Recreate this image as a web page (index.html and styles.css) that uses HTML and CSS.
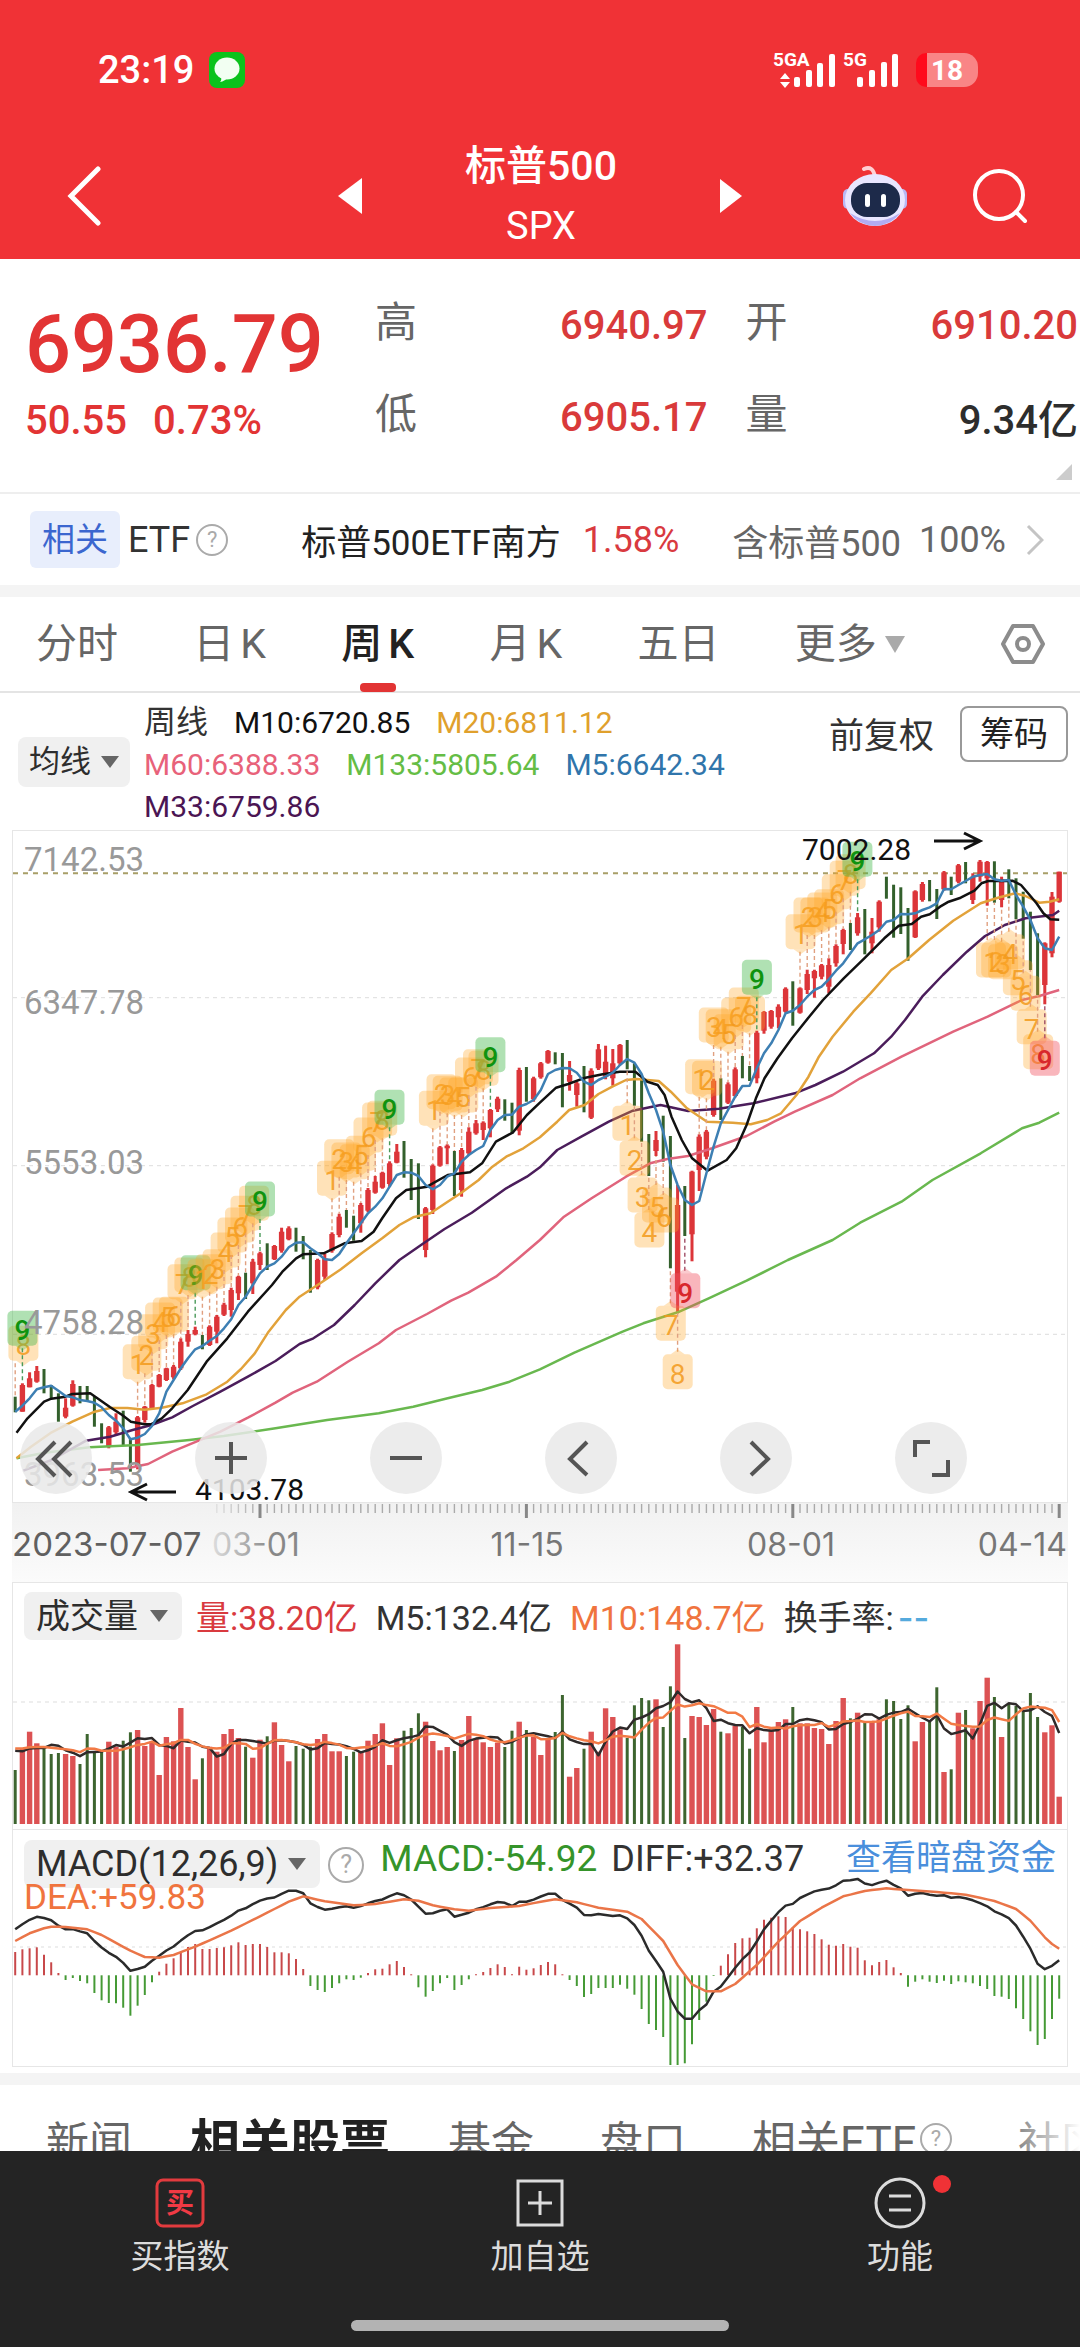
FILE: index.html
```html
<!DOCTYPE html>
<html lang="zh-CN">
<head>
<meta charset="utf-8">
<meta name="viewport" content="width=device-width, initial-scale=1">
<title>标普500 SPX</title>
<link rel="stylesheet" href="styles.css">
</head>
<body>
<header class="top">
  <div class="status">
    <div class="status-side">
      <span class="clock">23:19</span>
      <svg class="msg" viewBox="0 0 36 36" aria-hidden="true"><rect width="36" height="36" rx="8" fill="#0bc21c"/><ellipse cx="18" cy="16.500" rx="12.500" ry="11" fill="#f2fff2"/><path d="M12 24q1 4-1 6 5-1 7-4z" fill="#f2fff2"/></svg>
    </div>
    <div class="status-side">
      <svg class="signals" viewBox="0 0 128 40" aria-label="5GA 5G">
        <g fill="#fff">
          <text x="0" y="16" class="net">5GA</text><text x="70" y="16" class="net">5G</text>
          <path d="M12 23l5 6H7zM12 38l5-6H7z"/>
          <rect x="21" y="27" width="6" height="10" rx="2"/><rect x="33" y="20" width="6" height="17" rx="2"/><rect x="44" y="13" width="6" height="24" rx="2"/><rect x="56" y="4" width="6" height="33" rx="2"/>
          <rect x="84" y="27" width="6" height="10" rx="2"/><rect x="96" y="20" width="6" height="17" rx="2"/><rect x="108" y="12" width="6" height="25" rx="2"/><rect x="119" y="4" width="6" height="33" rx="2"/>
        </g>
      </svg>
      <span class="battery">18</span>
    </div>
  </div>
  <nav class="bar">
    <button class="icon-btn" aria-label="返回"><svg width="36" height="60" viewBox="0 0 36 60"><path d="M32 3 5 30l27 27" fill="none" stroke="#fff" stroke-width="5" stroke-linecap="round"/></svg></button>
    <div class="switcher">
      <button class="icon-btn" aria-label="上一个"><svg width="24" height="36" viewBox="0 0 24 36"><path d="M24 0v36L0 18z" fill="#fff"/></svg></button>
      <h1 class="title">标普500<small>SPX</small></h1>
      <button class="icon-btn" aria-label="下一个"><svg width="22" height="34" viewBox="0 0 22 34"><path d="M0 0v34l22-17z" fill="#fff"/></svg></button>
    </div>
    <div class="bar-actions">
      <button class="icon-btn" aria-label="智能助手"><svg width="66" height="62" viewBox="0 0 66 62"><path d="M22 4q9-4 11 8" fill="none" stroke="#ffd0d4" stroke-width="4" stroke-linecap="round"/><rect x="1" y="24" width="10" height="20" rx="5" fill="#b9b8f5"/><rect x="55" y="24" width="10" height="20" rx="5" fill="#b9b8f5"/><ellipse cx="33" cy="35" rx="30" ry="26" fill="#e9e6ff"/><path d="M8 48q25 16 50 0-8 12-25 13Q16 60 8 48z" fill="#b2acf2"/><rect x="9" y="18" width="49" height="34" rx="16" fill="#1d2a4a"/><rect x="23" y="29" width="5" height="13" rx="2.500" fill="#fff"/><rect x="39" y="29" width="5" height="13" rx="2.500" fill="#fff"/></svg></button>
      <button class="icon-btn" aria-label="搜索"><svg width="56" height="56" viewBox="0 0 56 56"><circle cx="27" cy="27" r="24" fill="none" stroke="#fff" stroke-width="4"/><path d="m44 44 9 9" stroke="#fff" stroke-width="4" stroke-linecap="round"/></svg></button>
    </div>
  </nav>
</header>

<main>
  <section class="quote">
    <div class="now"><strong>6936.79</strong><p><span>50.55</span><span>0.73%</span></p></div>
    <dl class="facts">
      <div><dt>高</dt><dd>6940.97</dd></div>
      <div><dt>开</dt><dd>6910.20</dd></div>
      <div><dt>低</dt><dd>6905.17</dd></div>
      <div><dt>量</dt><dd class="plain">9.34亿</dd></div>
    </dl>
    <svg class="corner" width="16" height="16" viewBox="0 0 16 16" aria-hidden="true"><path d="M16 0v16H0z" fill="#ccc"/></svg>
  </section>

  <a class="etf" href="#etf">
    <span class="tag">相关</span><span class="etf-word">ETF</span><span class="help">?</span>
    <span class="etf-name">标普500ETF南方</span><span class="up">1.58%</span>
    <span class="etf-hold">含标普500</span><span class="etf-pct">100%</span>
    <svg width="18" height="32" viewBox="0 0 18 32" aria-hidden="true"><path d="m2 2 14 14L2 30" fill="none" stroke="#c4c4c4" stroke-width="3"/></svg>
  </a>

  <nav class="periods">
    <button>分时</button><button>日<span>K</span></button><button class="on">周<span>K</span></button><button>月<span>K</span></button><button>五日</button>
    <button class="more">更多<i class="caret light"></i></button>
    <button class="gear" aria-label="设置"><svg width="46" height="42" viewBox="0 0 46 42"><path d="M13 3h20l10 18-10 18H13L3 21z" fill="none" stroke="#8c8c8c" stroke-width="4" stroke-linejoin="round"/><circle cx="23" cy="21" r="6" fill="none" stroke="#8c8c8c" stroke-width="4"/></svg></button>
  </nav>

  <section class="averages">
    <button class="pick">均线<i class="caret"></i></button>
    <p class="legend"><span class="name">周线</span><span class="m10">M10:6720.85</span><span class="m20">M20:6811.12</span><br><span class="m60">M60:6388.33</span><span class="m133">M133:5805.64</span><span class="m5">M5:6642.34</span><br><span class="m33">M33:6759.86</span></p>
    <button class="adjust">前复权</button>
    <button class="chips">筹码</button>
  </section>

  <section class="charts">
    <div class="panel price">
      <svg id="price" viewBox="0 0 1054 671" role="img" aria-label="周K线图"></svg>
      <div class="tools">
        <button aria-label="最早"><svg viewBox="0 0 72 72"><path d="M51 20 34 37l17 17M35 20 18 37l17 17"/></svg></button>
        <button aria-label="放大"><svg viewBox="0 0 72 72"><path d="M36 20v32M20 36h32"/></svg></button>
        <button aria-label="缩小"><svg viewBox="0 0 72 72"><path d="M20 36h32"/></svg></button>
        <button aria-label="向左"><svg viewBox="0 0 72 72"><path d="M42 20 25 37l17 16"/></svg></button>
        <button aria-label="向右"><svg viewBox="0 0 72 72"><path d="m31 20 17 17-17 16"/></svg></button>
        <button aria-label="全屏"><svg viewBox="0 0 72 72"><path d="M35 20H20v15M37 53h16V38"/></svg></button>
      </div>
    </div>
    <svg id="axis" viewBox="0 0 1056 79" role="img" aria-label="日期"></svg>
    <div class="panel volume">
      <div class="panel-head">
        <button class="pick">成交量<i class="caret"></i></button>
        <span class="up">量:38.20亿</span><span>M5:132.4亿</span><span class="orange">M10:148.7亿</span><span>换手率:<b class="blank">--</b></span>
      </div>
      <svg id="volume" viewBox="0 0 1054 185" role="img" aria-label="成交量图"></svg>
    </div>
    <div class="panel macd">
      <svg id="macd" viewBox="0 0 1054 236" role="img" aria-label="MACD图"></svg>
      <div class="macd-head">
        <button class="pick">MACD(12,26,9)<i class="caret"></i></button><span class="help">?</span>
        <span class="down">MACD:-54.92</span><span>DIFF:+32.37</span><a href="#funds">查看暗盘资金</a>
      </div>
      <span class="dea orange">DEA:+59.83</span>
    </div>
  </section>

  <nav class="topics">
    <a href="#news">新闻</a><a href="#stocks" class="on">相关股票</a><a href="#fund">基金</a><a href="#book">盘口</a><a href="#etf" class="with-help">相关ETF<span class="help">?</span></a><a href="#social">社区</a>
  </nav>
</main>

<footer class="dock">
  <div class="dock-row">
    <button><svg width="50" height="50" viewBox="0 0 50 50"><rect x="2" y="2" width="46" height="46" rx="6" fill="none" stroke="#e23b3e" stroke-width="3"/><text x="25" y="35" text-anchor="middle" class="buy">买</text></svg>买指数</button>
    <button><svg width="50" height="50" viewBox="0 0 50 50"><path d="M3 3h44v44H3zM25 13v24M13 25h24" fill="none" stroke="#dcdcdc" stroke-width="3"/></svg>加自选</button>
    <button class="dot"><svg width="52" height="52" viewBox="0 0 52 52"><circle cx="26" cy="26" r="24" fill="none" stroke="#dcdcdc" stroke-width="3"/><path d="M15 19h22M15 33h22" stroke="#dcdcdc" stroke-width="3"/></svg>功能</button>
  </div>
  <div class="home"></div>
</footer>
<script src="chart.js"></script>
</body>
</html>
```
FILE: styles.css
```css
* { box-sizing: border-box; }
body { margin: 0; background: #fff; color: #333; font-family: Roboto, "Noto Sans CJK SC", sans-serif; }
button { border: 0; padding: 0; margin: 0; background: none; font: inherit; color: inherit; }
a { color: inherit; text-decoration: none; }
p, h1, dl, dd { margin: 0; }
svg { display: block; }

.top { background: #f03236; color: #fff; }
.status { height: 136px; padding: 4px 102px 0 98px; display: flex; justify-content: space-between; align-items: center; }
.status-side { display: flex; align-items: center; gap: 15px; }
.clock { font-size: 38px; font-weight: 500; }
.msg { width: 36px; height: 36px; }
.signals { width: 128px; height: 40px; overflow: visible; }
.net { font-size: 19px; font-weight: 700; }
.battery { width: 62px; height: 34px; border-radius: 10px 14px 14px 10px; background: linear-gradient(90deg, #ff0a1c 18%, #f98586 18%); font-size: 28px; font-weight: 700; line-height: 35px; text-align: center; }
.bar { height: 123px; padding: 0 52px 8px 66px; display: grid; grid-template-columns: 1fr 404px 1fr; align-items: center; }
.icon-btn { justify-self: start; }
.switcher { display: flex; justify-content: space-between; align-items: center; }
.title { display: grid; text-align: center; font-size: 41px; font-weight: 500; line-height: 60px; }
.title small { font-size: 38px; font-weight: 400; }
.bar-actions { display: flex; justify-content: flex-end; align-items: center; gap: 64px; }
.bar > .switcher { margin-left: -7px; margin-right: 7px; }

.quote { position: relative; display: grid; grid-template-columns: 350px 1fr; height: 235px; padding: 20px 2px 0 25px; border-bottom: 2px solid #eee; }
.now { color: #e23434; }
.now strong { display: block; font-size: 81px; font-weight: 500; line-height: 132px; }
.now p { display: flex; gap: 26px; font-size: 40px; line-height: 20px; }
.now p, .facts dd { font-weight: 500; }
.facts { display: grid; grid-template-columns: 1fr 1fr; align-content: start; column-gap: 38px; }
.facts > div { display: flex; justify-content: space-between; align-items: center; height: 92px; font-size: 40px; }
.facts dt { color: #666; font-size: 42px; line-height: 54px; padding-bottom: 4px; }
.facts dd { color: #d93a3a; }
.facts .plain { color: #2d2d2d; }
.corner { position: absolute; right: 8px; bottom: 12px; }

.up { color: #d93a3f; }
.etf { display: flex; align-items: center; height: 91px; padding: 0 36px 0 30px; font-size: 36px; white-space: nowrap; }
.tag { padding: 0 12px; line-height: 57px; border-radius: 6px; background: #e8eefc; color: #3b66cf; font-size: 33px; }
.etf-word { margin-left: 8px; }
.help { display: inline-block; width: 32px; height: 32px; border: 2px solid #aaa; border-radius: 50%; color: #aaa; font-size: 22px; line-height: 28px; text-align: center; }
.etf-word + .help { margin-left: 6px; }
.etf-name { color: #222; font-size: 35px; }
.etf .help + .etf-name { margin-left: 73px; }
.etf .up { margin-left: 22px; }
.etf-hold { margin-left: auto; color: #666; }
.etf-pct { margin-left: 18px; margin-right: 20px; color: #666; }

.periods { display: flex; justify-content: space-between; align-items: center; height: 108px; padding: 0 34px 0 36px; border-top: 12px solid #f4f4f4; border-bottom: 2px solid #e4e4e4; font-size: 41px; color: #666; }
.periods button { position: relative; line-height: 94px; height: 94px; }
.periods button span { margin-left: 6px; }
.periods .on { color: #222; font-weight: 500; }
.periods .on::after { content: ""; position: absolute; left: 50%; bottom: -1px; width: 36px; height: 9px; margin-left: -18px; border-radius: 4px; background: #e23434; }
.periods .more, .periods .gear { display: flex; align-items: center; gap: 8px; }
.periods .gear { margin-left: 20px; }
.caret { display: inline-block; border: 9px solid transparent; border-top: 12px solid #666; border-bottom: 0; }
.caret.light { border-width: 17px 10px 0; border-top-color: #aaa; }

.averages { display: flex; align-items: flex-start; height: 137px; padding: 9px 12px 0 18px; }
.pick { display: flex; align-items: center; gap: 10px; height: 50px; padding: 0 12px; border-radius: 8px; background: #f0f0f0; color: #2d2d2d; white-space: nowrap; }
.averages .pick { margin-top: 35px; padding: 0 11px; font-size: 31px; line-height: 46px; }
.legend { flex: 1; margin-left: 14px; font-size: 30px; line-height: 42px; white-space: nowrap; }
.legend .name { font-size: 32px; line-height: 40px; }
.legend span { margin-right: 26px; }
.m10 { color: #111; } .m20 { color: #e0a02c; } .m60 { color: #e8627a; } .m133 { color: #65bd45; } .m5 { color: #3075ab; } .m33 { color: #4b1553; }
.adjust { margin: 10px 26px 0 0; font-size: 35px; line-height: 50px; }
.chips { margin-top: 4px; height: 56px; padding: 0 18px; border: 2px solid #999; border-radius: 8px; font-size: 34px; line-height: 50px; color: #222; }

.charts { padding: 0 12px 6px; }
.panel { position: relative; border: 1px solid #e6e6e6; }
.panel svg, #axis { width: 100%; height: auto; }
#price { overflow: visible; }
.tools { position: absolute; left: 7px; bottom: 8px; display: flex; gap: 103px; }
.tools button { width: 72px; height: 72px; border-radius: 50%; background: rgba(233, 233, 233, .85); }
.tools path { fill: none; stroke: #555; stroke-width: 4; }
#axis { background: linear-gradient(#f1f1f1, #fbfbfb); }
.volume { border-bottom: 0; }
.panel-head { display: flex; align-items: center; gap: 18px; height: 61px; padding: 4px 0 0 11px; font-size: 34px; white-space: nowrap; }
.panel-head .pick { height: 48px; gap: 12px; padding: 0 14px 0 12px; margin-right: -4px; line-height: 44px; }
.orange { color: #f0743e; }
.down { color: #35942a; }
.blank { margin-left: 4px; color: #55aadd; font-family: Inter, sans-serif; font-weight: 500; }
.macd-head { position: absolute; left: 11px; right: 11px; top: 4px; display: flex; align-items: flex-start; font-size: 37px; line-height: 50px; white-space: nowrap; }
.macd-head .pick { margin-top: 6px; height: 48px; padding: 0 14px 0 12px; font-size: 36px; }
.macd-head .help { width: 36px; height: 36px; margin: 13px 16px 0 8px; font-size: 25px; line-height: 32px; }
.macd-head span + span { margin-left: 14px; font-size: 36px; }
.macd-head .help + span { margin-left: 0; font-size: 37px; }
.macd-head a { margin-left: auto; color: #4a8fdc; font-size: 35px; }
.dea { position: absolute; left: 11px; top: 48px; font-size: 35px; line-height: 40px; }

#price text { font-size: 33px; fill: #999; }
#price .mark { font-size: 30px; fill: #111; }
#price .n { font-size: 28px; text-anchor: middle; fill: #f39a1c; fill-opacity: .85; }
#price .n.hi { fill: #0f930f; fill-opacity: 1; font-weight: 500; }
#price .n.lo { fill: #d8282c; fill-opacity: 1; font-weight: 500; }
#axis text { font: 32px Inter, sans-serif; fill: #777; }

.topics { display: flex; align-items: center; gap: 66px; height: 120px; padding-left: 46px; border-top: 12px solid #f4f4f4; overflow: hidden; font-size: 43px; color: #666; white-space: nowrap; position: relative; }
.topics::after { content: ""; position: absolute; right: 0; top: 0; bottom: 0; width: 64px; background: linear-gradient(90deg, rgba(255, 255, 255, .2), #fff); }
.topics .on { color: #222; font-size: 50px; font-weight: 700; margin: 0 -8px; }
.with-help { display: flex; align-items: center; gap: 4px; font-size: 44px; }

.dock { position: fixed; left: 0; right: 0; bottom: 0; height: 196px; padding-top: 26px; background: #242424; color: #dcdcdc; }
.dock-row { display: grid; grid-template-columns: repeat(3, 1fr); height: 143px; align-items: start; }
.dock button { position: relative; justify-self: center; display: grid; justify-items: center; align-items: center; grid-template-rows: 52px 56px; font-size: 33px; line-height: 52px; }
.dot::after { content: ""; position: absolute; left: 50%; top: -2px; width: 18px; height: 18px; margin-left: 33px; border-radius: 50%; background: #f03236; }
.buy { font-size: 28px; font-weight: 700; fill: #f03a44; }
.home { width: 35%; height: 11px; margin: 0 auto; border-radius: 6px; background: #b3b3b3; }
```
FILE: chart.js
```js
const NS = 'http://www.w3.org/2000/svg';
const RED = '#dc3539', GREEN = '#33602c';
const el = (parent, name, attrs, text) => {
  const node = document.createElementNS(NS, name);
  for (const key in attrs) node.setAttribute(key, attrs[key]);
  if (text !== undefined) node.textContent = text;
  parent.appendChild(node);
  return node;
};
const r1 = v => Math.round(v * 10) / 10;
const barX = i => r1(2.2 + 7.2 * i);
const colX = u => r1(u / 2.904 - 13);
const line = (svg, pts, color, width = 2.5) => el(svg, 'polyline', {
  points: pts.map(p => p.join(',')).join(' '), fill: 'none', stroke: color, 'stroke-width': width, 'stroke-linejoin': 'round'
});
const nums = s => s.trim().split(/\s+/).map(Number);

// ---- price ----
const price = document.getElementById('price');
const py = c => r1(c / 3 - 11);
[533, 1037, 1543].forEach(c => el(price, 'path', { d: `M0 ${py(c)}H1054`, stroke: '#ddd', 'stroke-dasharray': '4 4' }));
el(price, 'path', { d: `M0 ${py(160)}H1054`, stroke: '#a89f68', 'stroke-width': 2, 'stroke-dasharray': '5 5' });

// g: high,low   r: high,top,bottom,low
const candles = `g1730,1777 r1690,1695,1775,1775 r1657,1675,1702,1702 r1638,1653,1685,1688 g1647,1720 g1695,1735 g1720,1805 r1735,1763,1790,1795 r1681,1692,1757,1760 g1698,1750 g1698,1745 g1728,1820 g1810,1870 r1818,1822,1880,1885 r1780,1805,1837,1845 g1772,1878 g1855,1955 r1788,1792,1940,1948 r1758,1760,1800,1808 r1692,1695,1765,1770
r1662,1665,1700,1702 r1643,1645,1680,1683 r1635,1640,1672,1678 r1555,1565,1645,1650 r1530,1542,1565,1580 r1520,1530,1543,1546 g1545,1588 r1516,1520,1575,1578 r1485,1490,1535,1570 r1448,1454,1484,1488 r1403,1410,1470,1490 r1367,1370,1420,1440 g1358,1437 r1317,1325,1390,1422 r1295,1300,1335,1350 g1270,1350 r1275,1278,1318,1320 r1223,1235,1292,1298 r1219,1225,1258,1261 g1223,1295
g1248,1318 g1290,1418 r1316,1320,1402,1408 r1302,1315,1370,1380 r1237,1242,1292,1298 r1181,1190,1245,1252 g1170,1223 g1187,1262 r1149,1155,1210,1238 r1104,1110,1172,1177 r1068,1085,1118,1121 r1055,1058,1103,1106 r1024,1030,1092,1100 r972,995,1028,1030 g963,1073 g1017,1140 g1030,1197 r1161,1165,1290,1312 r1033,1037,1170,1182 r978,982,1037,1040
r973,977,985,1033 g993,1128 r984,990,1110,1130 r922,935,1000,1005 r900,910,940,944 r904,908,930,960 r867,870,925,952 r830,836,868,876 g838,902 g848,940 r743,750,932,946 g741,845 r770,775,838,845 r726,730,772,776 r690,693,728,731 g697,733 g699,862 r723,765,785,812 r785,790,825,860 g738,877
r745,752,893,897 r672,688,745,750 r677,725,770,778 r687,730,775,797 r672,675,730,735 g660,748 g730,857 g780,965 g942,1068 r933,960,993,1008 g887,1025 g948,1345 r1095,1155,1415,1480 g1098,1248 r1052,1055,1243,1324 r943,950,1050,1113 r930,935,1010,1018 r776,782,885,890 g775,900 r787,793,848,852
r742,748,828,832 g708,775 g738,783 r632,638,775,790 r573,576,632,641 r570,573,620,626 r553,560,592,625 r502,506,575,578 g484,617 r502,505,578,581 r449,462,510,522 r449,453,475,533 r432,436,470,478 r415,435,500,520 r373,378,430,440 r326,330,372,403 g309,390 r279,292,340,347 g267,403 r294,335,370,400
r241,245,322,335 g170,236 g194,353 g202,342 g264,422 r211,214,352,354 r186,192,240,245 g180,244 g207,297 r153,157,208,212 g170,225 r132,136,185,190 g126,190 r160,170,240,252 r120,125,170,185 r123,126,175,257 g124,248 r170,178,240,262 g148,235 g175,298
g215,356 g275,450 g340,525 r367,370,495,553 r216,230,400,412 r155,155,245,248`.split(/\s+/).map(s => {
  const v = s.slice(1).split(',').map(Number);
  return { up: s[0] === 'r', v, high: v[0], low: v[v.length - 1] };
});
candles.forEach((k, i) => {
  const x = barX(i), color = k.up ? RED : GREEN;
  el(price, 'path', { d: `M${x} ${py(k.high)}V${py(k.low)}`, stroke: color, 'stroke-width': 3 });
  if (k.up) el(price, 'path', { d: `M${x} ${py(k.v[1])}V${py(k.v[2])}`, stroke: color, 'stroke-width': 5.4 });
});

const curve = (s, color) => {
  const v = nums(s), pts = [];
  for (let i = 0; i < v.length; i += 2) pts.push([colX(v[i]), py(v[i + 1])]);
  line(price, pts, color);
};
curve('48 1915 130 1898 260 1882 400 1875 550 1860 650 1848 800 1825 950 1800 1100 1780 1200 1760 1300 1735 1400 1710 1480 1685 1568 1648 1668 1598 1808 1535 1868 1510 1968 1477 2058 1435 2168 1382 2288 1320 2418 1260 2498 1208 2618 1145 2708 1080 2848 1000 2968 925 3018 908 3076 878', '#69b84f');
curve('285 1950 370 1945 430 1932 500 1895 570 1865 640 1835 720 1793 800 1748 850 1718 920 1685 1010 1625 1100 1570 1150 1530 1240 1482 1310 1442 1360 1418 1440 1370 1500 1320 1568 1260 1638 1190 1718 1135 1818 1070 1888 1030 1938 1017 1998 1008 2068 985 2168 948 2248 905 2308 875 2418 825 2498 775 2618 710 2768 635 2868 590 2968 540 3018 528 3076 510', '#e0647c');
curve('68 1952 150 1920 250 1862 320 1850 385 1830 440 1815 500 1792 560 1758 640 1715 720 1670 800 1623 870 1572 910 1555 970 1515 1030 1455 1090 1390 1160 1320 1230 1270 1290 1228 1370 1178 1470 1105 1530 1070 1568 1042 1618 990 1688 950 1768 905 1838 872 1918 855 1998 873 2088 866 2188 850 2308 820 2368 795 2448 755 2538 700 2588 650 2628 600 2678 530 2738 465 2808 395 2858 350 2918 315 2978 295 3058 285 3076 272', '#4b1d5b');
curve('48 1915 90 1880 150 1837 210 1805 275 1775 320 1764 370 1764 420 1769 470 1763 530 1750 600 1723 660 1685 700 1647 740 1600 780 1535 830 1470 870 1430 930 1390 990 1348 1050 1300 1110 1255 1160 1215 1200 1192 1250 1180 1300 1145 1340 1118 1390 1080 1430 1040 1470 1010 1520 985 1568 952 1618 905 1653 870 1698 855 1738 822 1778 800 1818 780 1848 777 1913 783 1948 815 1993 863 2053 905 2128 908 2180 913 2228 900 2268 880 2313 825 2348 770 2378 710 2418 650 2478 575 2528 520 2588 450 2638 415 2698 360 2768 302 2848 250 2898 233 2948 220 2978 228 3018 248 3048 245 3076 238', '#e2a23a');
curve('48 1838 80 1795 128 1745 149 1736 190 1730 210 1722 262 1720 290 1740 320 1762 355 1785 380 1805 420 1813 440 1812 470 1795 500 1765 545 1710 600 1625 660 1555 720 1475 790 1395 820 1355 860 1315 880 1303 940 1300 1000 1270 1050 1263 1085 1235 1110 1195 1150 1135 1180 1110 1240 1100 1300 1065 1365 1057 1400 1030 1440 965 1490 937 1530 885 1568 848 1615 803 1650 792 1700 773 1750 763 1800 755 1845 755 1880 785 1910 795 1930 825 1950 890 1980 960 2010 1015 2055 1052 2110 1020 2138 985 2168 915 2195 835 2220 775 2258 715 2300 655 2350 590 2390 540 2450 475 2510 415 2568 355 2610 317 2648 312 2675 290 2700 283 2730 260 2755 245 2790 233 2830 212 2850 190 2870 183 2940 182 2965 195 2990 225 3010 250 3030 280 3050 298 3076 299', '#111');
const m5 = nums(`1775 1757 1735 1708 1702 1697 1712 1728 1732 1740 1743 1748 1762 1785 1802 1825 1858 1853 1842 1818 1780 1715 1680 1645 1615 1588 1578 1562 1548 1525 1498 1455 1430 1395 1360 1340 1330 1310 1282 1268 1267 1285 1300 1318 1320 1302 1270 1240 1210 1180 1160 1135 1100 1065 1057 1058 1068 1095 1108 1095 1070 1060 1025 1005 990 978 930 900 885 884 860 852 840 810 762 750 744 745 758 785 795 780 770 758 735 717 728 762 820 870 935 1035 1095 1140 1155 1143 1060 980 910 870 830 798 797 745 700 670 630 580 572 555 530 510 500 478 452 430 400 370 358 345 330 305 300 282 283 280 270 262 250 207 208 195 183 170 165 162 178 182 180 225 260 300 355 385 390 350`);
line(price, m5.map((c, i) => [barX(i), py(c)]), '#3d7fb3');

// Sequential counts: [first bar, side of the bar, first number, x y pairs]
const runs = [
  [0, 'hi', 8, '68 1570 65 1525'],
  [17, 'hi', 1, '400 1625 425 1600 445 1535 465 1500 487 1485 505 1483 530 1385 550 1365 568 1358'],
  [26, 'hi', 1, '588 1370 612 1355 632 1340 655 1290 675 1245 697 1215 713 1180 738 1150 755 1137'],
  [44, 'hi', 1, '964 1075 985 1010 1006 1020 1030 1025 1048 1000 1070 945 1095 900 1110 895 1131 862'],
  [58, 'hi', 1, '1260 865 1282 815 1300 820 1320 825 1345 825 1365 765 1388 740 1404 745 1424 704'],
  [95, 'hi', 1, '2033 770 2053 775 2073 615 2093 620 2116 635 2138 585 2160 555 2178 580 2198 472'],
  [109, 'hi', 1, '2325 335 2348 285 2368 285 2388 270 2408 260 2430 215 2453 175 2470 155 2490 118'],
  [85, 'lo', 1, '1822 910 1843 1015 1866 1125 1886 1230 1908 1155 1928 1185 1948 1510 1968 1655 1990 1412'],
  [135, 'lo', 1, '2878 420 2893 420 2913 425 2933 395 2956 473 2978 520 2996 620 3015 695 3034 715']
];
runs.forEach(([start, kind, first, s]) => {
  const v = nums(s);
  for (let j = 0; j < v.length / 2; j++) {
    const x = colX(v[2 * j]), y = py(v[2 * j + 1]), n = first + j, nine = n === 9, up = kind === 'hi';
    const k = candles[start + j], bx = barX(start + j), end = py(up ? k.high : k.low);
    const fill = nine ? (up ? '#43b849' : '#f0525f') : '#ffa726';
    el(price, 'path', { d: `M${bx} ${up ? y + 20 : y - 20}V${end}`, stroke: nine ? (up ? '#4a9a5a' : '#a05068') : '#e0a080', 'stroke-dasharray': '4 3', 'stroke-width': 1.4 });
    el(price, 'rect', { x: x - 15, y: y - 17.5, width: 30, height: 35, rx: 5, fill, 'fill-opacity': nine ? .42 : .33 });
    const s = up ? 1 : -1;
    el(price, 'path', { d: `M${x - 7} ${y + s * 17.5}l7 ${s * 5}l7 ${-s * 5}z`, fill, 'fill-opacity': .3 });
    el(price, 'text', { x, y: y + 12, class: nine ? `n ${kind}` : 'n' }, n);
  }
});
[['7142.53', 118], ['6347.78', 547], ['5553.03', 1025], ['4758.28', 1507], ['3963.53', 1961]].forEach(([t, c]) => el(price, 'text', { x: 11, y: Math.round(py(c) + 12) }, t));
el(price, 'text', { x: 789, y: 29, class: 'mark' }, '7002.28');
el(price, 'path', { d: 'M921 10h46M951 2l16 8-16 8', stroke: '#111', 'stroke-width': 3, fill: 'none' });
el(price, 'text', { x: 182, y: 669, class: 'mark' }, '4103.78');
el(price, 'path', { d: 'M163 661h-45M134 653l-16 8 16 8', stroke: '#111', 'stroke-width': 3, fill: 'none' });

// ---- date axis ----
const axis = document.getElementById('axis');
for (let i = 28; i < 146; i++) {
  const major = (i - 34) % 37 === 0;
  el(axis, 'path', { d: `M${r1(barX(i) + 1)} 1V${major ? 15 : 10}`, stroke: major ? '#888' : '#aaa', 'stroke-width': major ? 3 : 1.4, opacity: Math.min(1, (i - 26) / 8) });
}
const fade = el(axis, 'linearGradient', { id: 'fade', gradientUnits: 'userSpaceOnUse', x1: 200, x2: 260, y1: 0, y2: 0 });
el(fade, 'stop', { offset: 0, 'stop-color': '#ddd' });
el(fade, 'stop', { offset: 1, 'stop-color': '#888' });
el(axis, 'text', { x: 0, y: 53, style: 'fill:#606060;font-size:33px' }, '2023-07-07');
el(axis, 'text', { x: 200, y: 53, style: 'fill:url(#fade)' }, '03-01');
el(axis, 'text', { x: 515, y: 53, 'text-anchor': 'middle' }, '11-15');
el(axis, 'text', { x: 779, y: 53, 'text-anchor': 'middle' }, '08-01');
el(axis, 'text', { x: 1055, y: 53, 'text-anchor': 'end' }, '04-14');

// ---- volume ----
const volume = document.getElementById('volume');
el(volume, 'path', { d: 'M0 58H1054', stroke: '#ddd', 'stroke-dasharray': '4 4' });
const tops = nums(`600 535 485 520 530 552 549 552 558 582 492 545 545 515 530 512 487 480 528 515 615 501 514 414 531 628 565 530 545 492 477 504 530 563 509 499 457 525 574 528 536 530 507 492 544 544 558 545 545 512 492 460 585 505 482 474 430 455 513 541 531 543 510 438 507 517 531 518 531 482 455 480 500 555 505 486 375 620 594 536 485 545 415 441 478 504 406 384 391 388 471 349 223 504 438 441 465 417 485 490 468 470 536 411 517 478 456 448 411 460 460 474 477 522 453 384 445 428 455 455 448 388 393 447 406 514 456 450 352 606 598 428 420 475 393 323 381 501 402 408 425 369 441 487 466 680`);
const size = tops.map(t => (762 - t) / 3);
size.forEach((h, i) => {
  const up = candles[i].up, w = up ? 5.4 : 3;
  el(volume, 'rect', { x: r1(barX(i) - w / 2), y: r1(180 - h), width: w, height: r1(h), fill: up ? '#dc5253' : '#3d652f' });
});
const mean = n => {
  const past = Array(n - 1).fill(78).concat(size);
  return size.map((_, i) => [barX(i), r1(180 - past.slice(i, i + n).reduce((a, b) => a + b) / n)]);
};
line(volume, mean(5), '#2f2a2a');
line(volume, mean(10), '#f27a45');

// ---- MACD ----
const macd = document.getElementById('macd');
el(macd, 'path', { d: 'M0 117H1054', stroke: '#ddd', 'stroke-dasharray': '3 4' });
const ends = nums(`396 388 385 382 404 427 459 480 474 483 490 519 541 549 550 563 587 557 525 487 455 431 415 396 381 372 387 387 384 382 376 367 375 372 372 381 397 397 400 417 447 498 510 516 504 490 478 480 473 459 448 446 433 423 441 463 502 530 513 490 474 510 495 478 463 456 444 433 441 463 440 449 445 435 426 433 463 480 498 531 522 504 504 504 494 506 524 567 612 630 651 740 745 730 673 600 545 468 437 403 369 355 353 325 299 293 289 291 322 328 334 342 358 374 377 372 380 383 421 436 426 420 442 459 500 485 478 485 489 482 492 484 487 490 498 507 528 530 537 565 597 634 675 657 597 536`);
const anchors = nums('0 363 2 340 4 325 5 320 7 321 10 328 12 345 16 392 18 411 20 413 22 405 25 380 30 332 35 278 38 245 40 229 43 244 47 256 50 252 54 238 56 242 58 256 61 268 63 272 66 264 70 258 73 245 75 238 78 247 81 263 85 275 87 297 90 363 92 435 94 493 96 514 98 514 100 492 103 435 106 365 109 303 112 263 115 229 118 213 121 205 124 210 128 216 132 224 136 243 139 267 141 302 143 352 144 372 145 386');
const dea = [];
for (let a = 0; a + 3 < anchors.length; a += 2) {
  const [i0, c0, i1, c1] = anchors.slice(a, a + 4);
  for (let i = i0; i <= i1; i++) dea[i] = c0 + (c1 - c0) * (i - i0) / (i1 - i0);
}
const my = c => r1(c / 3 - 10);
ends.forEach((c, i) => el(macd, 'path', { d: `M${barX(i)} ${my(466)}V${Math.min(235, my(c))}`, stroke: c < 466 ? '#c8484a' : '#459a35', 'stroke-width': 2 }));
line(macd, dea.map((c, i) => [barX(i), my(c + (ends[i] - 466) / 2)]), '#2b2b2b');
line(macd, dea.map((c, i) => [barX(i), my(c)]), '#ea7548');
```
